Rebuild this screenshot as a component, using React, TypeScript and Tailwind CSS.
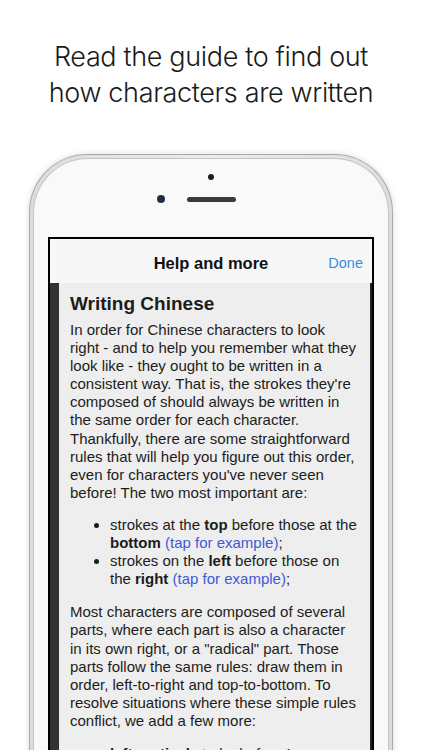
import React from "react";

const LINK = "text-[#4159d6]";

function Link({ children }: { children: React.ReactNode }) {
  return <span className={LINK}>{children}</span>;
}

export default function App() {
  return (
    <div className="relative h-[750px] w-[422px] overflow-hidden bg-white">
      {/* Caption */}
      <div className="pt-[39px] text-center font-['Inter',sans-serif] text-[27px] font-light leading-[36px] tracking-[-0.35px] text-[#1a1a1a]">
        Read the guide to find out
        <br />
        how characters are written
      </div>

      {/* Phone */}
      <div className="ml-[29px] mt-[43px] w-[364px] rounded-t-[58px] border border-b-0 border-[#a9a9a9] bg-gradient-to-r from-[#dcdcdc] via-[#ececec] to-[#dcdcdc] px-[3px] pt-[3px] shadow-[0_0_6px_rgba(0,0,0,0.14)]">
        <div className="flex h-[640px] flex-col items-center rounded-t-[55px] border border-b-0 border-[#c4c4c4] bg-[#f9f9f9]">
          {/* Sensor dot */}
          <div className="mt-[15px] h-[6px] w-[6px] rounded-full bg-[#1d1d1f]" />
          {/* Camera + speaker */}
          <div className="mt-[15px] flex items-center gap-[22px]">
            <div className="h-[8px] w-[8px] rounded-full bg-[#1f2a3a] shadow-[inset_0_0_1px_#6a7a90]" />
            <div className="h-[5px] w-[49px] rounded-full bg-[#3a3a3c]" />
            <div className="w-[8px]" />
          </div>

          {/* Screen */}
          <div className="mt-[34px] w-[326px] self-center border-2 border-b-0 border-black bg-[#f7f7f7]">
            {/* Nav bar */}
            <div className="relative flex h-[44px] items-center justify-center pt-[4px] font-['Liberation_Sans',Arial,sans-serif]">
              <span className="text-[16.5px] font-bold text-[#111]">Help and more</span>
              <span className="absolute right-[9px] top-[14px] text-[14.5px] leading-[20px] text-[#3b8de0]">Done</span>
            </div>

            {/* Content */}
            <div className="h-[480px] border-l-[9px] border-r-[2px] border-l-[#333] border-r-[#222] bg-[#eeeeee] pl-[11px] pt-[10px] font-['Liberation_Sans',Arial,sans-serif] text-[15px] leading-[18.1px] text-[#1c1c1c] whitespace-nowrap">
              <h2 className="text-[19px] font-bold leading-[22px]">Writing Chinese</h2>
              <p className="mt-[6px]">
                In order for Chinese characters to look
                <br />
                right - and to help you remember what they
                <br />
                look like - they ought to be written in a
                <br />
                consistent way. That is, the strokes they're
                <br />
                composed of should always be written in
                <br />
                the same order for each character.
                <br />
                Thankfully, there are some straightforward
                <br />
                rules that will help you figure out this order,
                <br />
                even for characters you've never seen
                <br />
                before! The two most important are:
              </p>
              <ul className="mt-[14px] list-disc pl-[40px]">
                <li>
                  strokes at the <b>top</b> before those at the
                  <br />
                  <b>bottom</b> <Link>(tap for example)</Link>;
                </li>
                <li>
                  strokes on the <b>left</b> before those on
                  <br />
                  the <b>right</b> <Link>(tap for example)</Link>;
                </li>
              </ul>
              <p className="mt-[15px]">
                Most characters are composed of several
                <br />
                parts, where each part is also a character
                <br />
                in its own right, or a "radical" part. Those
                <br />
                parts follow the same rules: draw them in
                <br />
                order, left-to-right and top-to-bottom. To
                <br />
                resolve situations where these simple rules
                <br />
                conflict, we add a few more:
              </p>
              <ul className="mt-[15px] list-disc pl-[40px]">
                <li>
                  <b>left-vertical</b> stroke before <b>top</b>
                </li>
              </ul>
            </div>
          </div>
        </div>
      </div>
    </div>
  );
}
